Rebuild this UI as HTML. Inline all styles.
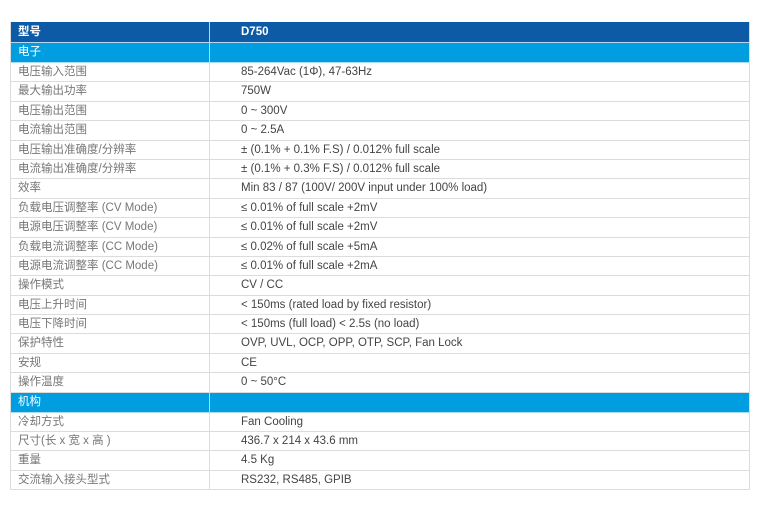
<!DOCTYPE html><html><head><meta charset="utf-8"><style>
body{margin:0;background:#fff;width:760px;height:508px;overflow:hidden}
.t{position:absolute;left:10px;top:22px;width:740px;font-family:"Liberation Sans","Noto Sans CJK SC",sans-serif;font-size:11.5px;border:1px solid #dcdcdc;border-top:0;border-bottom:0;box-sizing:border-box}
.r{height:19.4px;box-sizing:border-box;border-bottom:1px solid #dcdcdc;display:flex;white-space:nowrap;line-height:18.4px;overflow:hidden}
.r div:first-child{width:199px;border-right:1px solid #dcdcdc;padding-left:7px;color:#777;box-sizing:border-box}
.r div+div{padding-left:31px;color:#444}
.h{background:#0d5aa7;border-bottom-color:#b8d8f0;height:21px;line-height:21px}
.h div{color:#fff!important;font-weight:bold}
.s{background:#009ee0;border-bottom-color:#a8dcf5;height:20px;line-height:19px}
.s div{color:#fff!important}
.h div:first-child,.s div:first-child{border-right-color:#b8d8f0}
</style></head><body><div class="t">
<div class="r h"><div>型号</div><div>D750</div></div>
<div class="r s"><div>电子</div><div></div></div>
<div class="r"><div>电压输入范围</div><div>85-264Vac (1Φ), 47-63Hz</div></div>
<div class="r"><div>最大输出功率</div><div>750W</div></div>
<div class="r"><div>电压输出范围</div><div>0 ~ 300V</div></div>
<div class="r"><div>电流输出范围</div><div>0 ~ 2.5A</div></div>
<div class="r"><div>电压输出准确度/分辨率</div><div>± (0.1% + 0.1% F.S) / 0.012% full scale</div></div>
<div class="r"><div>电流输出准确度/分辨率</div><div>± (0.1% + 0.3% F.S) / 0.012% full scale</div></div>
<div class="r"><div>效率</div><div>Min 83 / 87 (100V/ 200V input under 100% load)</div></div>
<div class="r"><div>负载电压调整率 (CV Mode)</div><div>≤ 0.01% of full scale +2mV</div></div>
<div class="r"><div>电源电压调整率 (CV Mode)</div><div>≤ 0.01% of full scale +2mV</div></div>
<div class="r"><div>负载电流调整率 (CC Mode)</div><div>≤ 0.02% of full scale +5mA</div></div>
<div class="r"><div>电源电流调整率 (CC Mode)</div><div>≤ 0.01% of full scale +2mA</div></div>
<div class="r"><div>操作模式</div><div>CV / CC</div></div>
<div class="r"><div>电压上升时间</div><div>&lt; 150ms (rated load by fixed resistor)</div></div>
<div class="r"><div>电压下降时间</div><div>&lt; 150ms (full load) &lt; 2.5s (no load)</div></div>
<div class="r"><div>保护特性</div><div>OVP, UVL, OCP, OPP, OTP, SCP, Fan Lock</div></div>
<div class="r"><div>安规</div><div>CE</div></div>
<div class="r"><div>操作温度</div><div>0 ~ 50°C</div></div>
<div class="r s"><div>机构</div><div></div></div>
<div class="r"><div>冷却方式</div><div>Fan Cooling</div></div>
<div class="r"><div>尺寸(长 x 宽 x 高 )</div><div>436.7 x 214 x 43.6 mm</div></div>
<div class="r"><div>重量</div><div>4.5 Kg</div></div>
<div class="r"><div>交流输入接头型式</div><div>RS232, RS485, GPIB</div></div>
</div></body></html>
